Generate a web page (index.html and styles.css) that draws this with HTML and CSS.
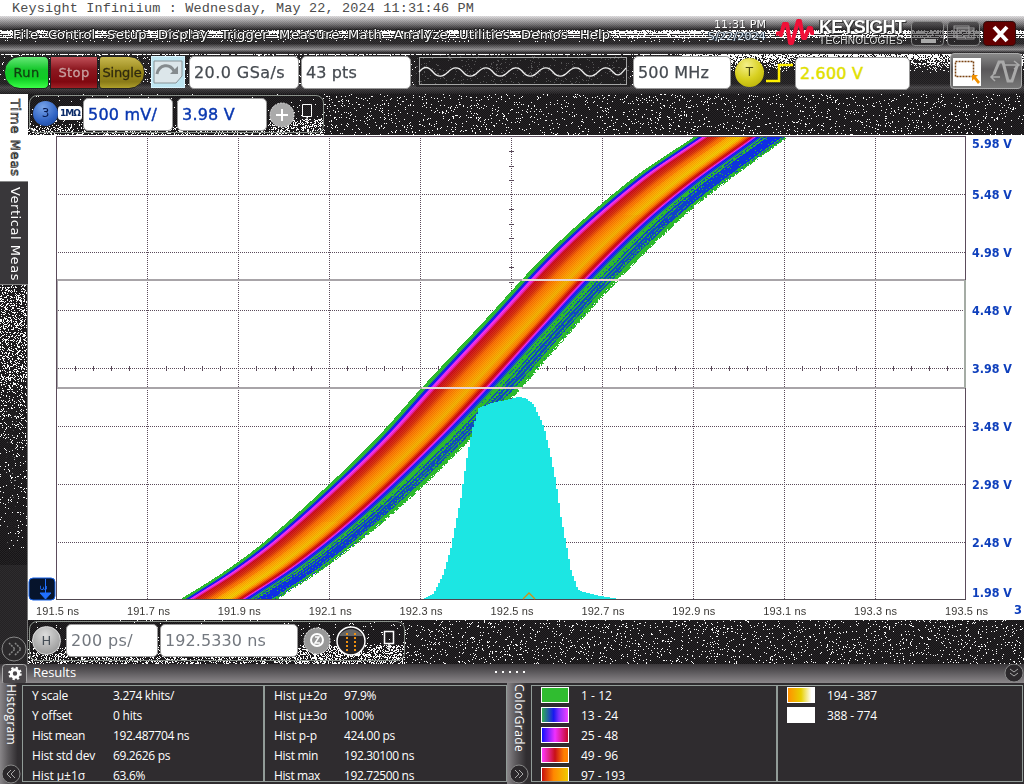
FILE: index.html
```html
<!DOCTYPE html>
<html lang="en">
<head>
<meta charset="utf-8">
<title>Keysight Infiniium</title>
<link rel="stylesheet" href="styles.css">
</head>
<body>
<div class="stamp"><span data-w="462">Keysight Infiniium : Wednesday, May 22, 2024 11:31:46 PM</span></div>

<header class="head">
  <canvas class="fill" data-kind="head"></canvas>
  <div class="menubar">
    <nav class="menu">
      <span class="m35" data-w="26">File</span><span class="m59" data-w="47">Control</span><span class="m51" data-w="40">Setup</span><span class="m63" data-w="50">Display</span><span class="m58" data-w="47">Trigger</span><span class="m69" data-w="61">Measure</span><span class="m46" data-w="34">Math</span><span class="m65" data-w="54">Analyze</span><span class="m62" data-w="51">Utilities</span><span class="m59" data-w="47">Demos</span><span data-w="30">Help</span>
    </nav>
    <div class="clock"><span data-w="52">11:31 PM</span><span data-w="58">5/22/2024</span></div>
    <svg class="spark" width="38" height="32" viewBox="0 0 38 32"><path d="M0 18L4 17L5 19L8 8H11L14 27H16L22 5H24L27 22H29L33 12H35L36 17H38" fill="none" stroke="#f01038" stroke-width="4" stroke-linejoin="round"/></svg>
    <div class="brand"><b data-w="86">KEYSIGHT</b><span data-w="84">TECHNOLOGIES</span></div>
    <div class="winbtns">
      <i class="win"><svg width="33" height="24"><rect x="9" y="17" width="15" height="4" fill="#aaa"/></svg></i>
      <i class="win"><svg width="33" height="24" fill="none" stroke="#999"><rect x="9" y="6" width="17" height="11"/><rect x="6" y="4" width="15" height="11"/><path d="M6 6H21M9 8H26"/></svg></i>
      <i class="win close"><svg width="33" height="24"><path d="M10 5L23 19M23 5L10 19" stroke="#fff" stroke-width="4"/></svg></i>
    </div>
  </div>
  <div class="tools">
    <div class="run"><span data-w="26">Run</span></div>
    <div class="stop"><span data-w="31">Stop</span></div>
    <div class="single"><span data-w="39">Single</span></div>
    <svg class="auto" width="34" height="32"><rect x=".5" y=".5" width="33" height="31" fill="#bfe6f2" stroke="#d8f4ff"/><path d="M3 5H31V20L25 27H3Z" fill="#dce6ea" stroke="#8a9498"/><path d="M6 18C8 8 19 7 23 15" fill="none" stroke="#858b8e" stroke-width="3"/><path d="M19 18L27 10V18Z" fill="#858b8e"/></svg>
    <div class="field w110"><span data-w="91">20.0 GSa/s</span></div>
    <div class="field w110 g1"><span data-w="51">43 pts</span></div>
    <svg class="wave" width="216" height="34"><rect x="1" y="1" width="214" height="32" fill="#1f1d1f" opacity=".75"/><rect x="4.500" y="3.500" width="207" height="27" fill="none" stroke="#a5a5a5"/><path d="M4 18C9 12 13 12 18 18S28 23 33 18S43 12 48 18S58 23 63 18S73 12 78 18S88 23 93 18S103 12 108 18S118 23 123 18S133 12 138 18S148 23 153 18S163 12 168 18S178 23 183 18S193 12 198 18S206 20 211 14" fill="none" stroke="#eee" stroke-width="1.300"/></svg>
    <div class="field w98"><span data-w="71">500 MHz</span></div>
    <div class="ball trig">T</div>
    <svg class="edge" width="29" height="22"><path d="M1 19H14V3H28" fill="none" stroke="#fff000" stroke-width="2.500"/></svg>
    <div class="field w115 yellow"><span data-w="63">2.600 V</span></div>
    <div class="modes">
      <svg width="30" height="30"><rect x="1" y="1" width="28" height="28" fill="#fff"/><rect x="3.500" y="4.500" width="18" height="15" fill="none" stroke="#7a4210" stroke-width="1.500" stroke-dasharray="2 1"/><path d="M20 18H26L24 20L28 25L26 27L22 22L20 24Z" fill="#f09000"/></svg>
      <svg width="38" height="30" fill="none" stroke="#aaa" stroke-width="1.500"><path d="M12 17L17 5H21L26 24H30L35 9" stroke-width="3"/><path d="M22 8H37M32 4L37 8L32 12M18 20H9M13 16L9 20L13 24"/></svg>
    </div>
  </div>
</header>

<main class="work">
  <aside class="side">
    <canvas class="fill" data-kind="side"></canvas>
    <div class="tab on"><span data-h="78">Time Meas</span></div>
    <div class="tab"><span data-h="94">Vertical Meas</span></div>
    <div class="ghost"><span data-h="158">Measurements</span></div>
    <svg class="roundbtn" width="26" height="26"><circle cx="13" cy="13" r="12" fill="#2b292b" stroke="#888"/><path d="M8 7L14 13L8 19M14 7L20 13L14 19" fill="none" stroke="#888" stroke-width="1.500" stroke-dasharray="2 1"/></svg>
  </aside>
  <section class="center">
    <div class="strip">
      <canvas class="fill" data-kind="noise"></canvas>
      <div class="group">
        <div class="ball blue">3</div>
        <b class="ohm"><span data-w="20">1MΩ</span></b>
        <div class="field w89 navy"><span data-w="69">500 mV/</span></div>
        <div class="field w89 navy g5"><span data-w="53">3.98 V</span></div>
        <svg class="plus" width="26" height="26"><circle cx="13" cy="13" r="12" fill="#aaa" stroke="#ddd" stroke-dasharray="2 1"/><path d="M13 7V19M7 13H19" stroke="#fff" stroke-width="2"/></svg>
        <svg class="pin" width="14" height="22"><path d="M2.500 2.500H11.500V14.500H2.500ZM7 15V21" fill="none" stroke="#fff"/></svg>
      </div>
    </div>
    <div class="scope">
      <canvas id="plot" width="996" height="485"></canvas>
      <svg id="labels" class="labels" width="996" height="485"></svg>
    </div>
    <div class="strip low">
      <canvas class="fill" data-kind="noise"></canvas>
      <div class="group lowgroup">
        <div class="ball horiz">H</div>
        <div class="field w92 pale"><span data-w="62">200 ps/</span></div>
        <div class="field w138 pale g2"><span data-w="101">192.5330 ns</span></div>
        <svg class="zoomb" width="88" height="32"><circle cx="14" cy="16" r="13" fill="#999" stroke="#eee" stroke-dasharray="2 1"/><circle cx="14" cy="15" r="6" fill="none" stroke="#fff" stroke-width="2"/><path d="M12 12H16L12 18H17" fill="none" stroke="#fff" stroke-width="1.500"/><circle cx="48" cy="16" r="14" fill="#242124" stroke="#fff" stroke-width="1.500"/><path d="M36 11C42 2 54 2 60 11Z" fill="#666"/><path d="M44 8V26M52 8V26" stroke="#f09010" stroke-width="2" stroke-dasharray="2"/></svg>
        <svg class="pin" width="14" height="22"><path d="M2.500 2.500H11.500V14.500H2.500ZM7 15V21" fill="none" stroke="#fff" stroke-width="1.500"/></svg>
      </div>
    </div>
  </section>
</main>

<div class="results">
  <svg class="gear" width="25" height="19"><rect x=".5" y=".5" width="24" height="20" rx="3" fill="#4b484b" stroke="#aaa"/><circle cx="13" cy="9.500" r="3.700" fill="none" stroke="#fff" stroke-width="3"/><circle cx="13" cy="9.500" r="5.500" fill="none" stroke="#fff" stroke-width="2.500" stroke-dasharray="2.200 2.120"/></svg>
  <span class="rtitle" data-w="43">Results</span>
  <svg class="grip" width="32" height="4"><path d="M0 2H32" stroke="#fff" stroke-width="2" stroke-dasharray="2 5"/></svg>
  <svg class="down" width="20" height="20"><circle cx="10" cy="10" r="9" fill="#2b282b" stroke="#888"/><path d="M6 6L10 9L14 6M6 10L10 13L14 10" fill="none" stroke="#aaa"/></svg>
</div>

<footer class="panels">
  <div class="ptab"><span data-h="61">Histogram</span><svg width="20" height="20"><circle cx="10" cy="10" r="9" fill="#2b282b" stroke="#888"/><path d="M10 6L6 10L10 14M14 6L10 10L14 14" fill="none" stroke="#aaa"/></svg></div>
  <dl class="box b1">
    <dt data-w="36">Y scale</dt><dd data-w="61">3.274 khits/</dd><dt data-w="40">Y offset</dt><dd data-w="29">0 hits</dd><dt data-w="53">Hist mean</dt><dd data-w="76">192.487704 ns</dd><dt data-w="63">Hist std dev</dt><dd data-w="57">69.2626 ps</dd><dt data-w="53">Hist µ±1σ</dt><dd data-w="32">63.6%</dd>
  </dl>
  <dl class="box b2">
    <dt data-w="53">Hist µ±2σ</dt><dd data-w="32">97.9%</dd><dt data-w="53">Hist µ±3σ</dt><dd data-w="30">100%</dd><dt data-w="43">Hist p-p</dt><dd data-w="51">424.00 ps</dd><dt data-w="44">Hist min</dt><dd data-w="70">192.30100 ns</dd><dt data-w="46">Hist max</dt><dd data-w="70">192.72500 ns</dd>
  </dl>
  <div class="ptab p2"><span data-h="68">ColorGrade</span><svg width="20" height="20"><circle cx="10" cy="10" r="9" fill="#2b282b" stroke="#888"/><path d="M6 6L10 10L6 14M10 6L14 10L10 14" fill="none" stroke="#aaa"/></svg></div>
  <dl class="box c1">
    <dt class="sw s1"></dt><dd data-w="31">1 - 12</dd><dt class="sw s2"></dt><dd data-w="37">13 - 24</dd><dt class="sw s3"></dt><dd data-w="37">25 - 48</dd><dt class="sw s4"></dt><dd data-w="37">49 - 96</dd><dt class="sw s5"></dt><dd data-w="44">97 - 193</dd>
  </dl>
  <dl class="box c2">
    <dt class="sw s6"></dt><dd data-w="50">194 - 387</dd><dt class="sw s7"></dt><dd data-w="50">388 - 774</dd>
  </dl>
</footer>
<script src="scope.js"></script>
</body>
</html>
```
FILE: styles.css
```css
* { box-sizing: border-box; }
body { margin: 0; width: 1024px; height: 784px; overflow: hidden; background: #2f2c2f; font-family: "DejaVu Sans", Verdana, sans-serif; color: #fff; }
svg, canvas { display: block; flex: none; }
span { white-space: nowrap; }
.fill { position: absolute; left: 0; top: 0; }

.stamp { height: 16px; background: #fff; padding: 1px 0 0 12px; color: #4c4c4c; font: 13.5px/16px "Liberation Mono", monospace; }

.head { position: relative; height: 78px; }
.menubar { position: relative; height: 38px; display: flex; }
.menu { width: 700px; padding: 10px 0 0 13px; display: flex; font-size: 13px; line-height: 17px; text-shadow: 1px 0 #222, -1px 0 #222, 0 1px #222, 0 -1px #222, 1px 1px #222, -1px -1px #222, 0 0 2px #222; }
.menu span { flex: none; }
.m35 { width: 35px; } .m59 { width: 59px; } .m51 { width: 51px; } .m63 { width: 63px; } .m58 { width: 58px; } .m69 { width: 69px; } .m46 { width: 46px; } .m65 { width: 65px; } .m62 { width: 62px; }
.clock { width: 70px; padding-top: 3px; display: flex; flex-direction: column; align-items: flex-end; padding-right: 4px; font-size: 11px; line-height: 12px; text-shadow: 1px 1px #333; }
.clock span + span { color: #e5eff8; text-shadow: 1px 0 #234, -1px 0 #234, 0 1px #333, 0 -1px #333; }
.spark { margin: 0 0 0 6px; }
.brand { width: 92px; padding: 3px 0 0 5px; font-family: "Liberation Sans", Arial, sans-serif; display: flex; flex-direction: column; }
.brand b { font-size: 18px; line-height: 17px; text-shadow: 1px 1px #333, -1px 0 #333; white-space: nowrap; }
.brand span { font-size: 10px; line-height: 10px; color: #ddd; text-shadow: 1px 1px #222, -1px 0 #222; }
.winbtns { display: flex; gap: 3px; padding: 5px 0 0 5px; }
.win { width: 33px; height: 25px; border: 1px solid #888; border-radius: 4px; background: rgba(40,38,40,.55); }
.close { background: #640000; border-color: #301010; }

.tools { position: relative; height: 40px; display: flex; align-items: flex-start; padding: 2px 0 0 4px; }
.run, .stop, .single { height: 33px; display: flex; align-items: center; justify-content: center; font-size: 13px; border: 1px solid #222; -webkit-text-stroke: .3px; }
.run { width: 45px; border-radius: 16px 5px 5px 16px; background: linear-gradient(#66e878, #16c82c 40%, #0fce24 70%, #3cff48); color: #104010; }
.stop { width: 48px; margin-left: 1px; background: linear-gradient(#c05058, #8c1820 40%, #800810 80%, #a02026); color: #c8a0a0; }
.single { width: 46px; margin-left: 1px; border-radius: 3px 16px 16px 3px; background: linear-gradient(#c8b850, #9a8a1c 45%, #8a7b18 80%, #b0a02c); color: #302a10; }
.auto { margin-left: 6px; }
.field { height: 33px; background: #fff; border: 1px solid #999; border-radius: 5px; color: #454a50; font-size: 16px; line-height: 31px; padding-left: 4px; flex: none; -webkit-text-stroke: .25px; }
.w110 { width: 110px; } .w98 { width: 98px; } .w115 { width: 115px; } .w89 { width: 90px; } .w92 { width: 92px; } .w138 { width: 138px; }
.tools > .w110 { margin-left: 4px; }
.tools > .g1 { margin-left: 2px; }
.wave { margin-left: 4px; margin-top: -2px; }
.tools > .w98 { margin-left: 2px; }
.yellow { color: #dfe000; -webkit-text-stroke: .5px; }
.ball { border-radius: 50%; text-align: center; flex: none; font-size: 12px; }
.trig { width: 29px; height: 29px; line-height: 29px; margin: 2px 0 0 4px; background: radial-gradient(circle at 40% 25%, #f4f08a, #d8d020 50%, #b0a800); color: #4a4a10; }
.edge { margin: 6px 0 0 1px; }
.tools > .w115 { margin: 1px 0 0 1px; }
.modes { display: flex; margin: -3px 0 0 40px; width: 72px; height: 36px; padding: 3px 1px; border: 1px solid #aaa; border-radius: 4px; background: linear-gradient(#888, #5a585a 45%, #777); }

.work { display: flex; height: 570px; }
.side { width: 28px; height: 570px; position: relative; display: flex; flex-direction: column; border-right: 1px solid #777; }
.tab { position: relative; width: 28px; height: 103px; background: #39373a; display: flex; justify-content: center; padding: 5px 0 0 2px; font-size: 13px; border-bottom: 1px solid #888; }
.tab.on { height: 88px; background: #fff; padding: 5px 0 0 1px; }
.tab span, .ghost span, .ptab span { writing-mode: vertical-rl; }
.tab span { line-height: 18px; }
.tab.on span { color: #fff; -webkit-text-stroke: .8px #333; }
.ghost { position: relative; margin-top: 125px; padding-left: 1px; height: 227px; font-size: 18px; line-height: 22px; color: #201e20; }
.roundbtn { position: relative; margin-left: 1px; margin-top: -1px; }
.center { width: 996px; }
.strip { position: relative; height: 41px; }
.group { position: relative; margin-left: 1px; width: 295px; height: 38px; top: 1px; border: 1px solid #899089; border-radius: 8px; display: flex; padding: 2px 0 0 3px; }
.blue { width: 25px; height: 25px; margin-top: 3px; line-height: 25px; background: radial-gradient(circle at 40% 25%, #78a4ea, #2f62c2 60%, #184090); color: #06184c; }
.ohm { width: 24px; height: 14px; margin: 8px 1px 0 0; background: #fff; color: #0a2a68; border-radius: 3px; font-size: 9px; line-height: 14px; padding-left: 2px; }
.navy { color: #0a38b0; -webkit-text-stroke: .4px #0a38b0; }
.g5 { margin-left: 4px; }
.plus { margin: 4px 0 0 2px; }
.pin { margin: 4px 0 0 5px; }
.scope { position: relative; height: 485px; background: #fff; }
.labels { position: absolute; left: 0; top: 0; }
.yl { font: bold 11.500px "DejaVu Sans", sans-serif; fill: #0e3fbc; }
.xl { font: 11px "Liberation Sans", Arial, sans-serif; fill: #3a3835; }
.low { height: 44px; }
.lowgroup { width: 376px; height: 40px; padding: 2px 0 0 2px; }
.horiz { width: 29px; height: 29px; margin: 2px 5px 0 0; border: 1px solid #ddd; background: radial-gradient(circle at 45% 30%, #ddd, #aaa 60%, #888); color: #454d55; font-size: 13px; line-height: 27px; }
.pale { color: #73787f; -webkit-text-stroke: 0; }
.g2 { margin-left: 2px; }
.zoomb { margin: 1px 0 0 5px; width: 78px; }
.lowgroup .pin { margin: 5px 0 0 1px; }

.results { height: 19px; display: flex; background: linear-gradient(#3a373a, #5e5b5e 45%, #8b878a); padding-left: 2px; font: 13px/17px "Open Sans", sans-serif; }
.rtitle { width: 462px; margin-left: 6px; flex: none; }
.grip { margin-top: 6px; }
.down { margin: -1px 0 0 477px; }
.panels { display: flex; height: 101px; background: #2f2c2f; font: 12px/20px "Open Sans", "Noto Sans", sans-serif; }
.ptab { width: 22px; background: linear-gradient(90deg, #898689, #5e5b5e 35%, #302d30 80%); display: flex; flex-direction: column; justify-content: space-between; padding-left: 1px; height: 101px; }
.ptab span { margin: 1px 0 0 1px; width: 18px; line-height: 18px; }
.p2 { width: 24px; padding-left: 2px; }
.box { margin: 2px 0 0; height: 97px; border: 1px solid #929c98; overflow: hidden; display: grid; grid-auto-rows: 20px; align-content: start; padding-left: 9px; }
.box dt, .box dd { margin: 0; white-space: nowrap; }
.b1 { width: 242px; grid-template-columns: 81px 1fr; }
.b2 { width: 243px; grid-template-columns: 70px 1fr; }
.c1 { width: 246px; grid-template-columns: 40px 1fr; }
.c2 { width: 246px; grid-template-columns: 40px 1fr; }
.box .sw { width: 28px; height: 16px; border: 1px solid #fff; align-self: start; margin-top: 1px; }
.s1 { background: #30bd30; }
.s2 { background: linear-gradient(90deg, #30b050, #1818f0 45%, #8030ff 65%, #f040ff); }
.s3 { background: linear-gradient(90deg, #1010ff, #f030ff 50%, #c80828); }
.s4 { background: linear-gradient(90deg, #ff38ff, #c81018 50%, #ff8000 85%); }
.s5 { background: linear-gradient(90deg, #c81010, #ff8800 45%, #eeca00); }
.s6 { background: linear-gradient(90deg, #ff9000, #e8d000 50%, #fff 90%); }
.s7 { background: #fff; }
```
FILE: scope.js
```js
// Letter-spacing that brings each label to its column width.
function fit() {
  document.querySelectorAll('[data-w],[data-h]').forEach(el => {
    const r = document.createRange();
    r.selectNodeContents(el);
    const b = r.getBoundingClientRect();
    const v = el.dataset.h !== undefined;
    const want = +(v ? el.dataset.h : el.dataset.w);
    const n = el.textContent.length;
    el.style.letterSpacing = ((want - (v ? b.height : b.width)) / n).toFixed(3) + 'px';
  });
}
fit();

// Seeded generator, so the speckle is stable between loads.
let seed = 7;
function rnd() {
  seed = (seed + 0x6D2B79F5) | 0;
  let t = Math.imul(seed ^ (seed >>> 15), 1 | seed);
  t = (t + Math.imul(t ^ (t >>> 7), 61 | t)) ^ t;
  return ((t ^ (t >>> 14)) >>> 0) / 4294967296;
}

function interp(pts, v) {
  if (v <= pts[0][0]) return pts[0][1];
  for (let i = 1; i < pts.length; i++) {
    if (v <= pts[i][0]) {
      const a = pts[i - 1], b = pts[i];
      return a[1] + (b[1] - a[1]) * (v - a[0]) / (b[0] - a[0]);
    }
  }
  return pts[pts.length - 1][1];
}

// Hermite curve through the points.
function smooth(pts, v) {
  let i = 1;
  while (i < pts.length - 1 && pts[i][0] < v) i++;
  const slope = k => {
    const a = pts[Math.max(0, k - 1)], b = pts[Math.min(pts.length - 1, k + 1)];
    return (b[1] - a[1]) / (b[0] - a[0]);
  };
  const p = pts[i - 1], q = pts[i], h = q[0] - p[0], t = (v - p[0]) / h;
  const t2 = t * t, t3 = t2 * t;
  return (2 * t3 - 3 * t2 + 1) * p[1] + (t3 - 2 * t2 + t) * h * slope(i - 1)
    + (3 * t2 - 2 * t3) * q[1] + (t3 - t2) * h * slope(i);
}

// Background textures of the bars: grey level and speckle density per row.
const headGrey = [[0, 215], [3, 175], [8, 115], [13, 45], [27, 45], [29, 80], [33, 140], [36, 50], [40, 35], [67, 38], [71, 72], [77, 38]];
document.querySelectorAll('canvas.fill').forEach(cv => {
  const p = cv.parentElement, kind = cv.dataset.kind;
  const w = cv.width = p.clientWidth, h = cv.height = p.clientHeight;
  const ctx = cv.getContext('2d');
  for (let y = 0; y < h; y++) {
    for (let x = 0; x < w; x++) {
      let g = (x + y) % 2 ? 22 : 38, s = 0.06;
      if (kind === 'head') {
        g = interp(headGrey, y) + ((x + y) % 2 ? 8 : -8);
        s = 0;
        if (y === 14) s = .4;
        else if (y >= 15 && y <= 17) s = y === 16 ? .7 : .95;
        else if (y === 18) s = .1;
        else if (y >= 19 && y <= 21) s = y === 20 ? .3 : .92;
        else if (y > 21 && y < 26) s = .06;
        else if (y === 38) s = .75;
        else if (y > 38 && x > 680) s = Math.max(0, .75 - (y - 38) * .04);
        else if (y > 38 && y < 69) s = .06;
      } else if (kind === 'side') {
        s = y < 290 ? .28 : Math.max(0, .16 - (y - 290) * .0009);
        if (y > 470) g = (x + y) % 2 ? 36 : 46;
      }
      const near = x < (p.querySelector('.lowgroup') ? 377 : 296);
      if (kind === 'noise' && near) s = x > 240 && y > 24 ? .4 : y > 32 ? .3 : y > 26 ? .12 : .02;
      if (s && rnd() < s) g = 252;
      ctx.fillStyle = `rgb(${g},${g - (g < 250 ? 2 : 0)},${g})`;
      ctx.fillRect(x, y, 1, 1);
    }
  }
});

// Waveform plot, in screen coordinates.
const c = document.getElementById('plot').getContext('2d');
c.translate(-28, -135);
const px = (x, y, w, h, col) => { c.fillStyle = col; c.fillRect(x, y, w, h); };
const INK = '#5b4b5b';
const cols = [147, 238, 329, 420, 511, 602, 693, 784, 875];
const rows = [194, 252, 310, 368, 426, 484, 542];
cols.forEach(x => { for (let y = 138; y < 599; y += 2) px(x, y, 1, 1, INK); });
rows.forEach(y => { for (let x = 58; x < 965; x += 2) px(x, y, 1, 1, INK); });
for (let i = 1; i < 50; i++) if (i % 5) px(Math.round(56.5 + i * 18.18), 366, 1, 5, INK);
for (let i = 1; i < 32; i++) if (i % 4) px(509, Math.round(136.5 + i * 14.5), 5, 1, INK);
px(56, 136, 910, 1, INK);
px(56, 136, 1, 464, INK);
px(965, 136, 1, 464, INK);

const left = [[137, 693], [180, 630], [250, 550], [325, 480], [388, 421], [437, 377], [483, 330], [540, 266], [572, 223], [599, 180]];
const right = [[137, 787], [207, 694], [278, 620], [330, 572], [388, 521], [440, 470], [507, 400], [563, 331], [599, 277]];
const stops = [
  [0, [45, 185, 45]], [.035, [45, 190, 45]], [.055, [20, 40, 220]], [.075, [25, 20, 245]],
  [.095, [245, 50, 245]], [.12, [235, 40, 200]], [.15, [200, 15, 30]], [.23, [212, 50, 15]],
  [.3, [245, 110, 5]], [.4, [250, 150, 0]], [.48, [238, 175, 0]], [.55, [252, 125, 0]],
  [.605, [200, 10, 15]], [.625, [210, 10, 60]], [.645, [245, 45, 235]], [.67, [25, 20, 250]],
  [.70, [20, 60, 220]], [.73, [45, 190, 45]]
];
for (let y = 137; y < 599; y++) {
  const a = smooth(left, y), b = smooth(right, y);
  const tip = Math.max(0, 1 - Math.min(y - 137, 599 - y) / 110);
  for (let x = Math.round(a); x < b; x++) {
    const t = Math.max(0, (x - a) / (b - a));
    let col;
    if (t < .73) {
      let i = 1;
      while (stops[i][0] < t) i++;
      const p = stops[i - 1], q = stops[i], f = (t - p[0]) / (q[0] - p[0]);
      const d = ((x + y) % 2 ? 7 : -7);
      col = p[1].map((v, k) => Math.round(v + (q[1][k] - v) * f + d));
      if (t > .35 && t < .53 && tip > .3) col[1] += Math.round(tip * 25);
    } else {
      const streak = Math.sin(t * 145) + Math.sin(t * 260 + y * .025) * .5;
      const blueAmt = interp([[.73, -.9], [.79, .1], [.84, .8], [.9, .7], [.94, -.5], [1, -1.6]], t) + tip * .65;
      col = streak + (rnd() - .5) * 1.1 + blueAmt * 1.4 > .35 ? [15, 75 - tip * 30, 190 + tip * 40] : [45, 185, 45];
      if (t > .975 && rnd() < .35) continue;
    }
    px(x, y, 1, 1, `rgb(${col})`);
  }
}

// Measurement window limits.
const limit = y => {
  px(57, y, 908, 2, '#a8a4a8');
  const a = Math.round(smooth(left, y)), b = Math.round(smooth(right, y));
  px(a, y, b - a, 2, '#e8d5d5');
};
limit(279);
limit(387);
px(57, 280, 1, 108, '#aaa6aa');
px(964, 280, 2, 108, '#a5aca5');

const hist = [[423, 599], [433, 593], [443, 573], [450, 548], [455, 523], [460, 498], [463, 477], [467, 452], [472, 427], [478, 408], [490, 403], [510, 399], [517, 397], [525, 398], [533, 405], [543, 427], [550, 457], [555, 482], [560, 517], [565, 543], [570, 570], [577, 590], [587, 593], [600, 596], [617, 599]];
for (let x = 423; x < 618; x++) {
  const top = Math.round(interp(hist, Math.floor(x / 2) * 2));
  for (let y = top; y < 599; y++) px(x, y, 1, 1, (x + y) % 2 ? '#12ece8' : '#26e0de');
}
px(56, 599, 910, 1, '#504850');
c.strokeStyle = '#d09018';
c.lineWidth = 1.3;
c.beginPath(); c.moveTo(523, 599); c.lineTo(529, 593); c.lineTo(535, 599); c.stroke();

// Axis labels and channel marker.
const yPos = [143, 194, 252, 310, 368, 426, 484, 542, 592];
let out = '';
yPos.forEach((y, i) => {
  out += `<text class="yl" x="944" y="${y - 135 + 5}" textLength="40" lengthAdjust="spacingAndGlyphs">${(5.98 - i * .5).toFixed(2)} V</text>`;
});
for (let i = 0; i <= 10; i++) {
  out += `<text class="xl" x="${(8 + i * 90.9).toFixed(1)}" y="480" textLength="43">${(191.5 + i * .2).toFixed(1)} ns</text>`;
}
out += '<text class="yl" x="986" y="479">3</text>';
out += '<rect x="1" y="443" width="26" height="22" rx="4" fill="#06142c" stroke="#1460e8"/><path d="M17.500 444V464M12 458L17.500 464L23 458Z" stroke="#2070ff" fill="#2070ff"/><text x="12" y="450" transform="rotate(90 12 450)" font-size="9" font-family="DejaVu Sans" fill="#2070ff">3</text>';
document.getElementById('labels').innerHTML = out;
```
